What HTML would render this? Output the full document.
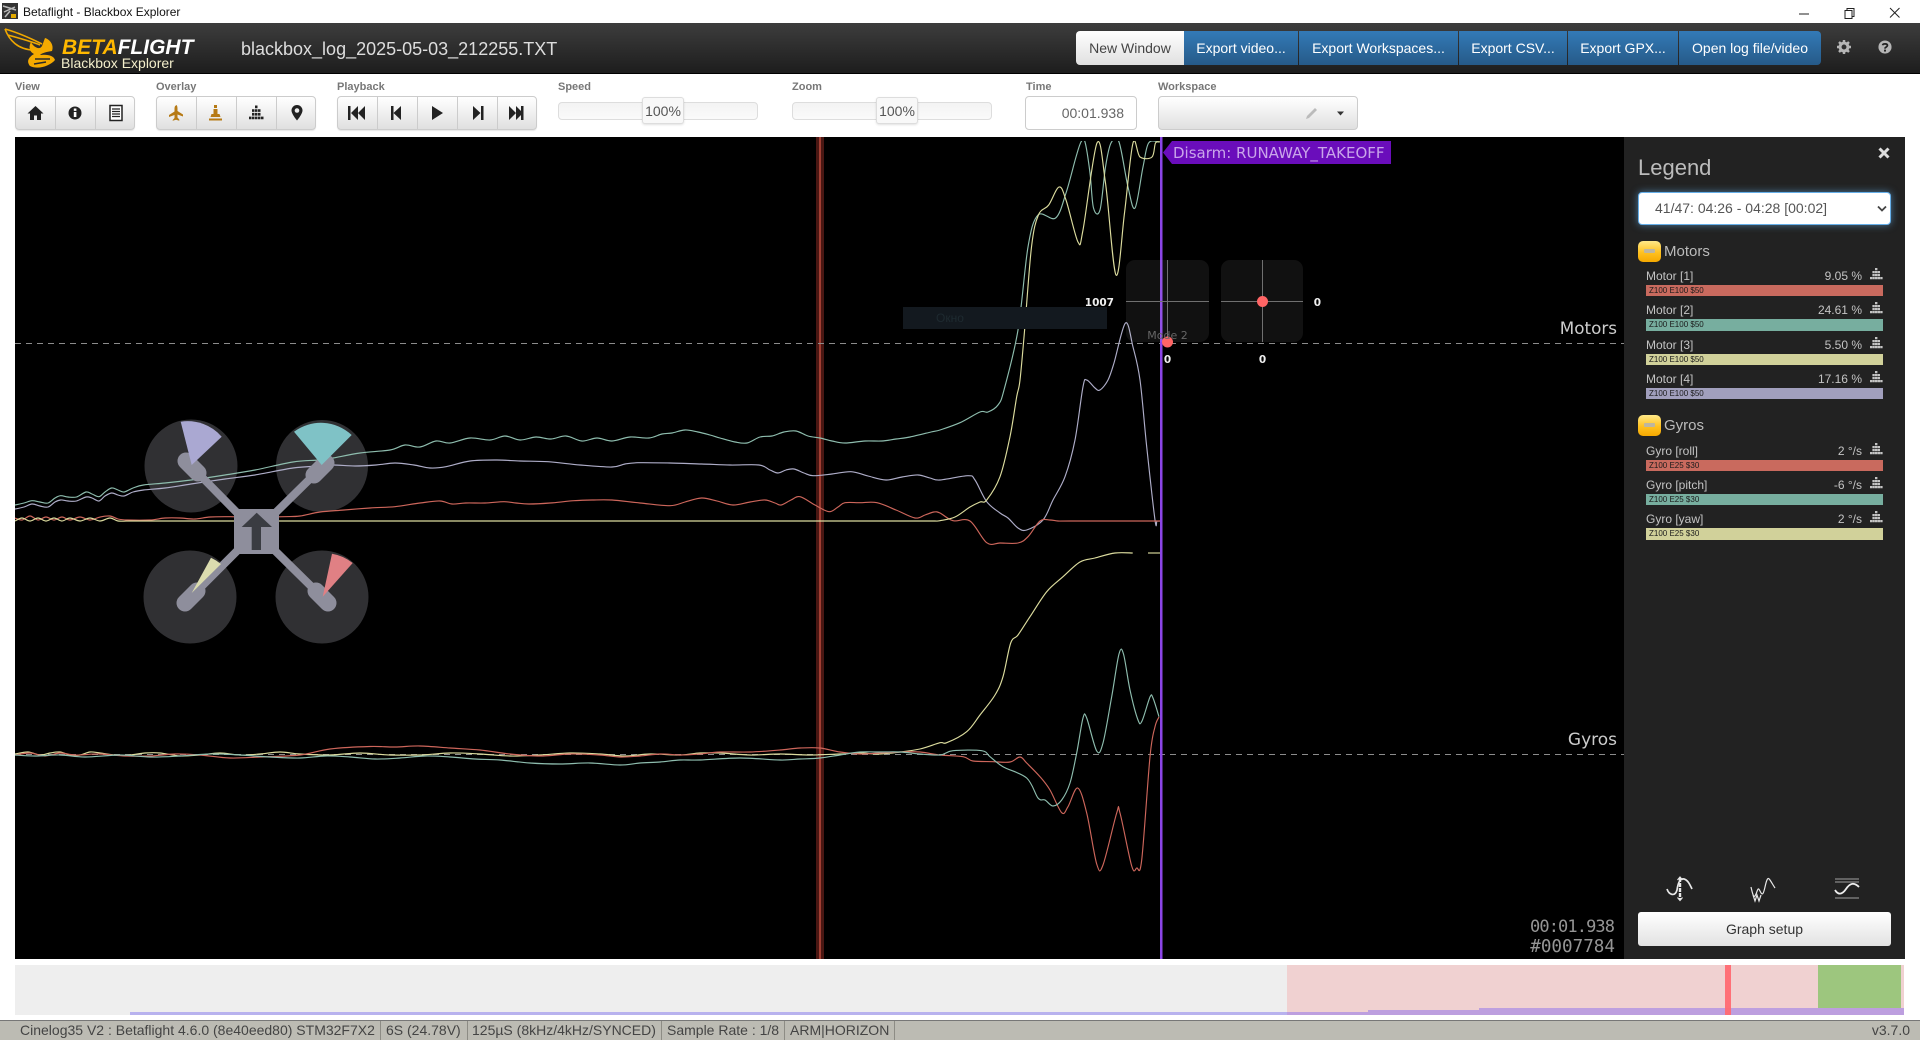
<!DOCTYPE html>
<html><head><meta charset="utf-8"><title>Betaflight - Blackbox Explorer</title>
<style>
html,body{margin:0;padding:0;width:1920px;height:1040px;overflow:hidden;background:#fff;font-family:"Liberation Sans",sans-serif}
.t{position:absolute;white-space:nowrap}
.a{position:absolute;box-sizing:border-box}
.hb{position:absolute;top:31px;height:34px;background:linear-gradient(#337ab7,#265a88);color:#fff;font-size:14px;line-height:34px;text-align:center;box-sizing:border-box}
.lab{position:absolute;top:81px;font-size:11px;font-weight:bold;color:#777;line-height:13px}
.grp{position:absolute;top:96px;height:34px;box-sizing:border-box;border:1px solid #ccc;border-radius:4px;background:linear-gradient(#fff,#e0e0e0);box-shadow:0 1px 1px rgba(0,0,0,.1)}
.div{position:absolute;top:96px;width:1px;height:34px;background:#ccc}
.sl{position:absolute;top:102px;height:18px;width:200px;box-sizing:border-box;border:1px solid #ddd;border-radius:4px;background:linear-gradient(#f3f3f3,#fafafa)}
.hd{position:absolute;top:97px;height:27px;width:42px;box-sizing:border-box;border:1px solid #ddd;border-radius:3px;background:#f8f8f8;box-shadow:0 1px 2px rgba(0,0,0,.12);text-align:center;font-size:14px;line-height:27px;color:#555}
.lb{position:absolute;left:1646px;font-size:12px;line-height:14px;color:#c4c4c4}
.v{position:absolute;left:1760px;width:102px;text-align:right;font-size:12px;line-height:14px;color:#c4c4c4}
.bar{position:absolute;left:1646px;width:237px;height:11px;font-size:8px;line-height:11px;padding-left:3px;color:#1b1b1b;box-sizing:border-box}
.col{position:absolute;left:1638px;width:23px;height:21px;border-radius:5px;background:linear-gradient(#ffe98a,#ffc11f 55%,#f5a800)}
.col i{position:absolute;left:6px;top:8px;width:11px;height:4px;background:#bdb6a0;border-radius:1px}
.h2{position:absolute;left:1664px;font-size:15px;line-height:18px;color:#bbb}
.sb{position:absolute;top:1021px;font-size:14px;line-height:19px;color:#444;white-space:nowrap}
.sp{position:absolute;top:1021px;width:1px;height:19px;background:#8d8c85}
</style></head><body>
<svg class="a" style="left:2px;top:3px" width="16" height="16" viewBox="0 0 16 16"><rect width="16" height="16" fill="#333"/><path d="M1 3 L14 7 M2 9 L13 4 M3 14 L8 8" stroke="#bbb" stroke-width="1.5"/><path d="M9 11h5v4H9z" fill="#e0a800"/></svg>
<div class="t" style="left:23px;top:5px;font-size:12px;line-height:14px;color:#111">Betaflight - Blackbox Explorer</div>
<svg class="a" style="left:1790px;top:3px" width="120" height="20" viewBox="0 0 120 20" fill="none" stroke="#222"><path d="M9 11h10"/><path d="M55 7.500h7v8h-7zM57 7.500v-2h7v8h-2"/><path d="M100 5l9.500 9.500M109.500 5L100 14.500"/></svg>

<div class="a" style="left:0;top:23px;width:1920px;height:51px;background:linear-gradient(#3d3d3d,#1d1d1d);border-bottom:1px solid #000"></div>
<svg class="a" style="left:4px;top:26px" width="56" height="44" viewBox="0 0 56 44" fill="none"><path d="M1 3 C12 6 24 11 38 18 M1 3 C5 14 14 24 30 24 M4 9 C14 12 26 15 36 19" stroke="#f0a800" stroke-width="1.6"/><path d="M27 16 C30 22 36 24 38 20 L41 12 C47 14 50 20 48 25 C42 26 38 27 36 29 C44 28 50 30 51 34 C46 40 34 44 26 40 C22 35 25 31 30 28 C26 26 24 22 27 16Z" fill="#f5aa00"/><path d="M31 33 L46 33 M30 38 L42 36" stroke="#2a2a2a" stroke-width="1.600"/></svg>
<div class="t" style="left:62px;top:36px;font-size:21px;line-height:24px;font-weight:bold;font-style:italic;color:#fff"><span style="color:#ffb800">BETA</span>FLIGHT</div>
<div class="t" style="left:61px;top:55px;font-size:14px;line-height:16px;color:#f3eecb">Blackbox Explorer</div>
<div class="t" style="left:241px;top:38px;font-size:18px;line-height:22px;color:#ddd">blackbox_log_2025-05-03_212255.TXT</div>

<div class="hb" style="left:1076px;width:108px;background:linear-gradient(#fff,#e0e0e0);color:#444;border-radius:4px 0 0 4px">New Window</div>
<div class="hb" style="left:1184px;width:114px">Export video...</div>
<div class="hb" style="left:1299px;width:159px">Export Workspaces...</div>
<div class="hb" style="left:1459px;width:108px">Export CSV...</div>
<div class="hb" style="left:1568px;width:110px">Export GPX...</div>
<div class="hb" style="left:1679px;width:142px;border-radius:0 4px 4px 0">Open log file/video</div>
<svg class="a" style="left:1837px;top:40px" width="14" height="14" viewBox="0 0 16 16"><circle cx="8" cy="8" r="4.500" fill="none" stroke="#b5b5b5" stroke-width="3.400"/><path d="M8 0v3M8 13v3M0 8h3M13 8h3M2.300 2.300l2 2M11.700 11.700l2 2M13.700 2.300l-2 2M4.300 11.700l-2 2" stroke="#b5b5b5" stroke-width="2.800"/></svg>
<svg class="a" style="left:1878px;top:40px" width="14" height="14" viewBox="0 0 16 16"><circle cx="8" cy="8" r="7.500" fill="#b5b5b5"/><path d="M5.300 6C5.500 4 10.800 3.800 10.800 6.300C10.800 8 8 8 8 9.800" fill="none" stroke="#222" stroke-width="2"/><rect x="6.900" y="11" width="2.200" height="2.200" fill="#222"/></svg>

<div class="lab" style="left:15px">View</div><div class="lab" style="left:156px">Overlay</div><div class="lab" style="left:337px">Playback</div><div class="lab" style="left:558px">Speed</div><div class="lab" style="left:792px">Zoom</div><div class="lab" style="left:1026px">Time</div><div class="lab" style="left:1158px">Workspace</div>
<div class="grp" style="left:15px;width:120px"></div><div class="div" style="left:55px"></div><div class="div" style="left:95px"></div>
<div class="grp" style="left:156px;width:160px"></div><div class="div" style="left:196px"></div><div class="div" style="left:236px"></div><div class="div" style="left:276px"></div>
<div class="grp" style="left:337px;width:200px"></div><div class="div" style="left:377px"></div><div class="div" style="left:417px"></div><div class="div" style="left:457px"></div><div class="div" style="left:497px"></div>
<svg class="a" style="left:0;top:96px" width="560" height="34" viewBox="0 96 560 34">
<path d="M35.500 106l-8 7.500h2.500v6.500h4v-4.500h3v4.500h4v-6.500h2.500z" fill="#222"/>
<circle cx="75" cy="113" r="6.500" fill="#222"/><rect x="73.800" y="108.500" width="2.600" height="2.400" fill="#fff"/><rect x="73.800" y="112" width="2.600" height="5" fill="#fff"/>
<rect x="110" y="105.500" width="12" height="15" fill="#fff" stroke="#222" stroke-width="1.500"/><path d="M112 109h8M112 111.500h8M112 114h8M112 116.500h8" stroke="#222" stroke-width="1.300"/>
<path d="M176 105c1.200 0 1.500 2 1.500 4v2l5.500 3.500v2l-5.500-2v3l1.800 2v1.300l-3.300-1-3.300 1V120l1.800-2v-3l-5.500 2v-2l5.500-3.500v-2c0-2 .3-4 1.500-4z" fill="#b67a15"/>
<path d="M214 105h3v3h-3zM213.500 109h4v5h2l1 3h-10l1-3h2zM209 118.500h13v2h-13z" fill="#b67a15"/>
<path d="M255 105.500h2.500v2.700H255zM252 109.200h2.500v2.700H252zM255 109.200h2.500v2.700H255zM258 109.200h2.500v2.700H258zM252 112.900h2.500v2.700H252zM255 112.900h2.500v2.700H255zM258 112.900h2.500v2.700H258zM249 116.600h2.500v2.700H249zM252 116.600h2.500v2.700H252zM255 116.600h2.500v2.700H255zM258 116.600h2.500v2.700H258zM261 116.600h2.500v2.700H261z" fill="#222"/>
<path d="M297 105a5.500 5.500 0 0 0-5.500 5.500c0 3.500 5.500 10 5.500 10s5.500-6.500 5.500-10A5.500 5.500 0 0 0 297 105z" fill="#222"/><circle cx="297" cy="110.500" r="2.300" fill="#eee"/>
<path d="M348 106h2.500v14H348zM358 106v14l-7-7zM365 106v14l-7-7z" fill="#222"/>
<path d="M391 106h2.500v14H391zM401 106v14l-7.500-7z" fill="#222"/>
<path d="M432 106l11 7-11 7z" fill="#222"/>
<path d="M473 106l7.500 7-7.500 7zM481 106h2.500v14H481z" fill="#222"/>
<path d="M509 106l7 7-7 7zM516 106l7 7-7 7zM521 106h2.500v14H521z" fill="#222"/>
</svg>
<div class="sl" style="left:558px"></div><div class="hd" style="left:642px">100%</div>
<div class="sl" style="left:792px"></div><div class="hd" style="left:876px">100%</div>
<div class="a" style="left:1025px;top:96px;width:112px;height:34px;border:1px solid #ccc;border-radius:4px;background:#fff;text-align:right;padding-right:12px;font-size:14px;line-height:33px;color:#666">00:01.938</div>
<div class="a" style="left:1158px;top:96px;width:200px;height:34px;border:1px solid #ccc;border-radius:4px;background:linear-gradient(#fff,#e0e0e0)"></div>
<svg class="a" style="left:1304px;top:104px" width="44" height="18" viewBox="0 0 44 18"><path d="M2 15l1-3 8-8 2 2-8 8z" fill="#bbb"/><path d="M33 7.500h7l-3.500 4z" fill="#333"/></svg>

<div class="a" style="left:15px;top:137px;width:1609px;height:822px;background:#000"></div>
<div class="a" style="left:1624px;top:137px;width:281px;height:822px;background:#222"></div>

<svg class="a" style="left:0;top:0" width="1624" height="960" viewBox="0 0 1624 960" fill="none">
<defs><clipPath id="cp"><rect x="15" y="141" width="1146" height="818"/></clipPath></defs>
<circle cx="191" cy="466" r="46.500" fill="#303033"/><circle cx="322" cy="466" r="46" fill="#303033"/><circle cx="190" cy="597" r="46.500" fill="#303033"/><circle cx="322" cy="597" r="46.500" fill="#303033"/>
<rect x="816" y="137" width="8" height="822" fill="#4a1713"/><rect x="819.200" y="137" width="1.600" height="822" fill="#b5483a"/>
<path d="M15 343.500H1624M15 754.500H1624" stroke="#8c8c8c" stroke-dasharray="6 5"/>
<g id="cv" stroke-width="1.150" stroke-linejoin="round" clip-path="url(#cp)">
<polyline stroke="#8ebdae" points="15,505 24,503 32,500.700 40,502 48,503 55,498 60.600,495.700 68,497 76.500,497 86,492 92,494 99,496.700 105,492 111.600,488 118,490 124,492 133,488 143.500,485 165,483 191,480 225,475 255,470 293,462 319,460 333,458 360,453 390,450 405,445 420,447 436,441 450,443 470,438 490,440 505,436 520,440 536,437 551,439 566,436 582,441 597,438 612,441 630,437 649,438 662,434 672,433 685,430 698,432 710,435 720,438 735,442 747,443 760,437 772,436 784,432 796,431 808,436 820,438 832,441 845,443 865,441 882,441 896,439 910,437 931,432 940,430 960,422.700 980,412 988,412 998,405 1004,390 1018,330 1028,247 1038,215 1055.600,218 1066,193 1076,157 1081,142 1085,142 1090,173 1093.500,208 1100,210 1105.500,167 1111,143 1119,142 1128,187 1135,208 1143,167 1148.600,143 1159,142"/>
<polyline stroke="#aeadc8" points="15,509 24,507 32,504 40,506 48,507 55,502 60.600,500 68,501 76.500,501 86,497 92,498 99,501 105,496 111.600,493 118,495 124,496 133,492 143.500,490 165,488 191,484 225,479 255,475 293,468 319,466 333,465 355,466 376,465 395,463 414,465 430,468 446,466.700 470,461 497,460 520,461 548,461.700 580,465 612,467 625,464 638,462.700 670,463 701.500,464 730,465 759,465 770,470 778,473 786,470 794,469 804,473 813,475.700 832,474 851,471.700 868,476 886,480 902,477 918,475 930,478 940,480 968,475.700 975,480 986.700,501.700 1000,513 1008,518 1018,528 1026.700,530 1043,520 1053,500 1065,476.700 1075,440 1083,386.700 1086.700,380 1095,388 1100,390 1108,380 1114,363 1125.500,323 1133,347 1140,380 1146.700,446.700 1155,520 1157,521 1160,521"/>
<polyline stroke="#cd665b" points="15,518 22,520 30,516 38,520 46,517 54,520 62,517 70,520 80,517 90,520 100,517 110,516 118,519 127.500,520 150,520 165,518 180,518 195,519 210,517 230,516.700 250,517 284,516.700 300,516 320,512 344,510 370,508 395,506.700 420,503 440,501 452,504 465.600,503 485,503 504,501.700 516,503 529,504 550,503 574,500.700 592,500 612,500 640,503 670,505.700 685,502 701.500,498 717,501 733,505 750,502 765,500 775,503 781,505 791,500 800,496.700 815,505 829,511.700 838,507 845,502.700 860,502.700 877,502.700 896,510 915,518 925,515 934,512 940,513 953,520.700 970,521 986.700,542.700 1000,543 1018,543 1028,536.700 1040,521 1050,520 1058,521 1070,521 1150,521 1160,521"/>
<polyline stroke="#dcdc9e" points="15,521 22,518 30,521 38,518 46,521 54,518 62,521 70,518 80,521 90,518 100,521 110,518 118,521 130,521 140,521 170,521 250,521 400,521 600,521 750,521 850,521 900,521 925,521 935,521 940,520.700 955,517 970,507 980,502 986.700,500 1000,476.700 1010,436.700 1016.700,396.700 1020,380 1024.600,330 1031.500,247 1038.400,215 1048.700,205 1059,187 1066,200 1078,242 1083,230 1097,143 1105.500,183 1116,275 1124.500,213 1133,143 1140,157 1152,157 1155.500,143 1160.600,142"/>
<polyline stroke="#dcdc9e" points="15,754 28,752 40,755 50,753 60,752 70,755 80,755 90,752 100,753 115,755 130,755 145,753 160,753 180,756 200,755 220,753 240,755 260,754 280,752 300,754 330,755 360,753 390,755 420,755 450,753 480,754 510,756 540,755 570,753 600,754 625,756 650,754 680,755 700,753 720,753 750,755 780,754 810,755 840,754 860,753 880,754 900,752 920,749 940,742.700 946.700,742.700 966.700,731.700 980,715 995,695 1003,676.700 1010.700,643 1018,635 1030,616.700 1046.700,591.700 1063,576.700 1080,562 1095,558 1115,553 1132.700,553"/>
<polyline stroke="#dcdc9e" points="1148,553 1160,553"/>
<polyline stroke="#cd665b" points="15,755 30,753 45,756 60,753 75,755 100,754 125,756 150,756 175,754 200,755 230,758 260,757 300,755 330,749 370,746.500 395,747 420,746 450,748 480,750 510,754 540,756 570,754 600,755 620,757 640,756 660,754 680,755 700,754 720,752 750,752 780,750 800,748 820,748 840,752 860,754 880,753 900,752 920,752 940,755 963,756.700 973,761 993,761.700 1010,762 1020,757 1026.700,763 1040,776.700 1050,790 1061.700,812.700 1068,806.700 1077.700,788 1086.700,813 1096.700,864 1103,865 1116.700,813 1120,813 1131.700,866 1136.700,868 1141.700,860 1150,756.700 1155,726.700 1159,717"/>
<polyline stroke="#8ebdae" points="15,755 35,756 60,755 85,757 120,755 150,757 180,756 210,754 240,755 270,757 300,758 325,756 350,757 375,759 400,758 425,756 450,757 475,759 500,760 530,763 560,764 590,763 620,765 640,763 660,762 680,760 700,760 740,758 780,760 800,759 820,758 840,755 860,752 880,752 900,752 920,754 940,755 953,750.700 981.700,750.700 990,756.700 1003,766.700 1026.700,778 1038,798 1045,800 1053,806 1061.700,800 1070,783 1076.700,753 1083,718 1086.700,718 1096.700,751 1103,743 1111.700,696.700 1119,654 1123.500,654 1130,690 1138,720 1142,721 1150,697 1153,698 1159,716.700"/>
</g>
<rect x="1160" y="137" width="2.500" height="822" fill="#8b45e6"/>
<path d="M1172 141h219v23h-219l-9-11.500z" fill="#6a0dbb"/>
<text x="1173" y="158" font-family="DejaVu Sans,sans-serif" font-size="15" fill="#c9a5ea">Disarm: RUNAWAY_TAKEOFF</text>
<text x="1617" y="334" text-anchor="end" font-family="DejaVu Sans,sans-serif" font-size="16.800" fill="#ccc">Motors</text>
<text x="1617" y="745" text-anchor="end" font-family="DejaVu Sans,sans-serif" font-size="17" fill="#ccc">Gyros</text>
<text x="1530" y="932" textLength="85" lengthAdjust="spacing" font-family="DejaVu Sans Mono,monospace" font-size="17" fill="#959595">00:01.938</text>
<text x="1615" y="952" text-anchor="end" font-family="DejaVu Sans Mono,monospace" font-size="17.600" fill="#959595">#0007784</text>

<rect x="903" y="307" width="204" height="22" fill="#13191f"/>
<text x="936" y="322" font-family="Liberation Sans,sans-serif" font-size="12" fill="#1e2a30">Окно</text>
<rect x="1126" y="260" width="83" height="82" rx="9" fill="#fff" fill-opacity=".065"/>
<rect x="1221" y="260" width="82" height="82" rx="9" fill="#fff" fill-opacity=".065"/>
<path d="M1126 301.500h83M1167.500 260v82M1221 301.500h82M1262.500 260v82" stroke="#707070"/>
<circle cx="1167.500" cy="342" r="5.500" fill="#ff6565"/><circle cx="1262.500" cy="301.500" r="5.500" fill="#ff6565"/>
<g font-family="DejaVu Sans,sans-serif" font-size="10.500" fill="#eee" font-weight="bold">
<text x="1114" y="306" text-anchor="end">1007</text><text x="1321" y="306" text-anchor="end">0</text><text x="1167.500" y="363" text-anchor="middle">0</text><text x="1262.500" y="363" text-anchor="middle">0</text></g>
<text x="1167.500" y="339" text-anchor="middle" font-family="DejaVu Sans,sans-serif" font-size="11" fill="#666">Mode 2</text>

<path d="M256 532L192 467M256 532L320 469M256 532L191 597M256 532L322 597" stroke="#8e8e9c" stroke-width="8"/>
<path d="M186 461L198 473M326 463L314 475M185 603L197 591M316 591L328 603" stroke="#8e8e9c" stroke-width="17" stroke-linecap="round"/>
<rect x="234" y="509" width="45" height="45" fill="#8e8e9c"/>
<path d="M256.700 512.700L272 527H261V550H251.700V527H241.700z" fill="#3a3c42"/>
<path d="M191.700 465L180.700 421.700A45 45 0 0 1 221.700 436.700z" fill="#aaa8d2"/>
<path d="M321.700 465L294 431.700A45 45 0 0 1 351.700 435z" fill="#7fc2c6"/>
<path d="M191.700 593L211 557.700A45 45 0 0 1 221 564z" fill="#dbdcaf"/>
<path d="M322.700 596.700L332 553.700A45 45 0 0 1 352.700 563z" fill="#e08084"/>
</svg>

<div class="t" style="left:1638px;top:155px;font-size:22px;line-height:26px;color:#bbb">Legend</div>
<svg class="a" style="left:1878px;top:147px" width="12" height="12" viewBox="0 0 12 12"><path d="M1.500 1.500l9 9M10.500 1.500l-9 9" stroke="#ddd" stroke-width="3"/></svg>
<div class="a" style="left:1638px;top:192px;width:253px;height:33px;background:#fff;border:1px solid #66afe9;border-radius:4px;box-shadow:0 0 8px rgba(102,175,233,.6);font-size:14px;line-height:31px;color:#555;padding-left:16px">41/47: 04:26 - 04:28 [00:02]</div>
<svg class="a" style="left:1876px;top:205px" width="12" height="8" viewBox="0 0 12 8"><path d="M2 1.500l4 4 4-4" fill="none" stroke="#444" stroke-width="1.800"/></svg>

<div class="col" style="top:241px"><i></i></div><div class="h2" style="top:243px">Motors</div>
<div class="lb" style="top:269px">Motor [1]</div><div class="v" style="top:269px">9.05 %</div><div class="bar" style="top:285px;background:#c96a5e">Z100 E100 $50</div>
<div class="lb" style="top:303px">Motor [2]</div><div class="v" style="top:303px">24.61 %</div><div class="bar" style="top:319px;height:12px;background:#77ae9f">Z100 E100 $50</div>
<div class="lb" style="top:338px">Motor [3]</div><div class="v" style="top:338px">5.50 %</div><div class="bar" style="top:354px;background:#d1d19a">Z100 E100 $50</div>
<div class="lb" style="top:372px">Motor [4]</div><div class="v" style="top:372px">17.16 %</div><div class="bar" style="top:388px;background:#a19fbd">Z100 E100 $50</div>
<div class="col" style="top:415px"><i></i></div><div class="h2" style="top:417px">Gyros</div>
<div class="lb" style="top:444px">Gyro [roll]</div><div class="v" style="top:444px">2 °/s</div><div class="bar" style="top:460px;background:#c96a5e">Z100 E25 $30</div>
<div class="lb" style="top:478px">Gyro [pitch]</div><div class="v" style="top:478px">-6 °/s</div><div class="bar" style="top:494px;background:#77ae9f">Z100 E25 $30</div>
<div class="lb" style="top:512px">Gyro [yaw]</div><div class="v" style="top:512px">2 °/s</div><div class="bar" style="top:528px;height:12px;background:#d1d19a">Z100 E25 $30</div>
<svg class="a" style="left:1870px;top:268px" width="13" height="270" viewBox="0 0 13 270" fill="#c4c4c4">
<defs><path id="b" d="M5 0h2.400v2.300H5zM2.400 3h2.400v2.300H2.400zM5 3h2.400v2.300H5zM7.600 3h2.400v2.300H7.600zM2.400 6h2.400v2.300H2.400zM5 6h2.400v2.300H5zM7.600 6h2.400v2.300H7.600zM0 9h2.200v2.300H0zM2.400 9h2.400v2.300H2.400zM5 9h2.400v2.300H5zM7.600 9h2.400v2.300H7.600zM10.200 9h2.400v2.300h-2.400z"/></defs>
<use href="#b" y="0"/><use href="#b" y="34"/><use href="#b" y="69"/><use href="#b" y="103"/><use href="#b" y="175"/><use href="#b" y="209"/><use href="#b" y="243"/>
</svg>

<svg class="a" style="left:1664px;top:872px" width="200" height="32" viewBox="0 0 200 32" fill="none" stroke="#e8e8e8" stroke-width="1.700">
<path d="M16 6v22" stroke-width="2.400" stroke-dasharray="4 1"/><path d="M13.500 8l2.500-3 2.500 3M13.500 25.500l2.500 3 2.500-3" stroke-width="1.200"/><path d="M3 17c2 6 8 8 10 1 1-7 3-12 7-11 4 1 6 6 8 10"/>
<path d="M87 15c2 9 3 12 5 7s2-7 4-3 3 5 5-4 3-10 5-7 3 5 5 8M89 23l2 6 2-6 2 6 2-6" stroke-width="1.200"/>
<path d="M171 7h24M171 10h24M171 26h24" stroke="#777" stroke-width="1.600"/><path d="M171 18c3 5 7 5 11-1s8-7 13-2" stroke-width="1.800" stroke="#eee"/>
</svg>
<div class="a" style="left:1638px;top:912px;width:253px;height:34px;background:linear-gradient(#fff,#e2e2e2);border-radius:3px;text-align:center;font-size:14px;line-height:34px;color:#333">Graph setup</div>

<div class="a" style="left:15px;top:965px;width:1889px;height:50px;background:#eee"></div>
<div class="a" style="left:1287px;top:965px;width:617px;height:50px;background:#f0d1d1"></div>
<div class="a" style="left:1818px;top:965px;width:83px;height:44px;background:#9dc67e"></div>
<div class="a" style="left:130px;top:1012px;width:1157px;height:3px;background:#b8b2ee"></div>
<div class="a" style="left:1287px;top:1012px;width:617px;height:3px;background:#bd9fdf"></div>
<div class="a" style="left:1368px;top:1010px;width:536px;height:5px;background:#bd9fdf"></div>
<div class="a" style="left:1479px;top:1008px;width:425px;height:7px;background:#bd9fdf"></div>
<div class="a" style="left:1725px;top:965px;width:6px;height:50px;background:#ff6a72;opacity:.95"></div>

<div class="a" style="left:0;top:1020px;width:1920px;height:20px;background:#bcbbb3;border-top:1px solid #777"></div>
<div class="sb" style="left:20px">Cinelog35 V2 : Betaflight 4.6.0 (8e40eed80) STM32F7X2</div><div class="sp" style="left:380px"></div>
<div class="sb" style="left:386px">6S (24.78V)</div><div class="sp" style="left:467px"></div>
<div class="sb" style="left:472px">125µS (8kHz/4kHz/SYNCED)</div><div class="sp" style="left:661px"></div>
<div class="sb" style="left:667px">Sample Rate : 1/8</div><div class="sp" style="left:784px"></div>
<div class="sb" style="left:790px">ARM|HORIZON</div><div class="sp" style="left:894px"></div>
<div class="sb" style="right:10px">v3.7.0</div>
<script>
document.querySelectorAll('#cv polyline').forEach(function(l){
var p=l.getAttribute('points').trim().split(/\s+/).map(function(s){return s.split(',').map(Number)}),d='M'+p[0][0]+' '+p[0][1];
for(var i=0;i<p.length-1;i++){var a=p[Math.max(i-1,0)],b=p[i],c=p[i+1],e=p[Math.min(i+2,p.length-1)];
d+='C'+(b[0]+(c[0]-a[0])/6).toFixed(1)+' '+(b[1]+(c[1]-a[1])/6).toFixed(1)+' '+(c[0]-(e[0]-b[0])/6).toFixed(1)+' '+(c[1]-(e[1]-b[1])/6).toFixed(1)+' '+c[0]+' '+c[1];}
var s=document.createElementNS('http://www.w3.org/2000/svg','path');s.setAttribute('d',d);s.setAttribute('stroke',l.getAttribute('stroke'));l.parentNode.replaceChild(s,l);});
</script>
</body></html>
